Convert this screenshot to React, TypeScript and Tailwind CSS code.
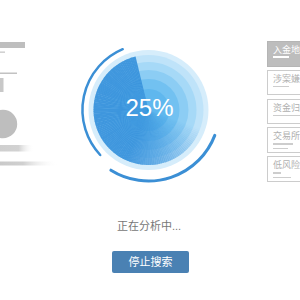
import React from "react";

const CX = 74.5;
const CY = 75;

function wedges() {
  const out: React.ReactElement[] = [];
  const step = 2;
  for (let a = 96; a < 345; a += step) {
    const mid = a + step / 2;
    let op = 0;
    if (mid < 110) op = 0;
    else if (mid < 205) op = ((mid - 110) / 95) * 0.95;
    else op = 0.95;
    if (op <= 0) continue;
    const r = 55;
    const a1 = ((a - 90) * Math.PI) / 180;
    const a2 = ((a + step + 0.4 - 90) * Math.PI) / 180;
    const x1 = CX + r * Math.cos(a1);
    const y1 = CY + r * Math.sin(a1);
    const x2 = CX + r * Math.cos(a2);
    const y2 = CY + r * Math.sin(a2);
    out.push(
      <path
        key={a}
        d={`M ${CX} ${CY} L ${x1.toFixed(2)} ${y1.toFixed(2)} A ${r} ${r} 0 0 1 ${x2.toFixed(2)} ${y2.toFixed(2)} Z`}
        fill="#3a93dc"
        fillOpacity={op}
      />
    );
  }
  return out;
}

function Progress() {
  return (
    <svg width="150" height="150" viewBox="0 0 150 150" className="block">
      <circle cx={CX} cy={CY} r="60" fill="#d6edfb" />
      <circle cx={CX} cy={CY} r="55" fill="#bfe3f9" />
      <circle cx={CX} cy={CY} r="48" fill="#a6d9f7" />
      <circle cx={CX} cy={CY} r="40" fill="#8ccdf4" />
      <circle cx={CX} cy={CY} r="31" fill="#72c1f1" />
      <circle cx={CX} cy={CY} r="21" fill="#5fb7ee" />
      {wedges()}
      <path
        d="M 26.2 120 A 66 66 0 0 1 48.7 14.2"
        fill="none"
        stroke="#3b8fd5"
        strokeWidth="2.5"
        strokeLinecap="round"
      />
      <path
        d="M 140.8 100.4 A 71 71 0 0 1 36.9 135.2"
        fill="none"
        stroke="#3b8fd5"
        strokeWidth="3"
        strokeLinecap="round"
      />
      <text
        x={CX + 1}
        y="81"
        textAnchor="middle"
        fontSize="24"
        fill="#ffffff"
        fontFamily="'Liberation Sans', Arial, sans-serif"
      >
        25%
      </text>
    </svg>
  );
}

function LeftArt() {
  return (
    <svg width="60" height="190" viewBox="0 0 60 190" className="block shrink-0">
      <defs>
        <linearGradient id="g1" x1="0" x2="1" y1="0" y2="0">
          <stop offset="0" stopColor="#cfcfcf" />
          <stop offset="0.55" stopColor="#d2d2d2" />
          <stop offset="1" stopColor="#ffffff" stopOpacity="0" />
        </linearGradient>
        <linearGradient id="g2" x1="0" x2="1" y1="0" y2="0">
          <stop offset="0" stopColor="#c9c9c9" />
          <stop offset="0.4" stopColor="#d0d0d0" />
          <stop offset="1" stopColor="#ffffff" stopOpacity="0" />
        </linearGradient>
      </defs>
      <rect x="0" y="42" width="25" height="6" fill="#bebebe" />
      <rect x="0" y="51.5" width="5" height="1.3" fill="#c8c8c8" />
      <rect x="0" y="72.5" width="17" height="1.5" fill="#c2c2c2" />
      <rect x="0" y="78" width="3.5" height="14" fill="#c8c8c8" />
      <circle cx="3" cy="124" r="14.2" fill="#bebebe" />
      <rect x="0" y="145" width="34" height="6.5" fill="url(#g1)" />
      <rect x="0" y="161.5" width="58" height="4" fill="url(#g2)" />
    </svg>
  );
}

const cards: { t: string; lines: number[] }[] = [
  { t: "涉案嫌疑", lines: [16] },
  { t: "资金归集", lines: [40] },
  { t: "交易所", lines: [20, 15] },
  { t: "低风险", lines: [8, 18] },
];

export default function App() {
  return (
    <div
      className="w-[300px] h-[300px] bg-white overflow-hidden flex flex-col"
      style={{ fontFamily: "'Liberation Sans', 'Noto Sans CJK SC', sans-serif" }}
    >
      <div className="flex items-start h-[190px] shrink-0">
        <LeftArt />
        <div className="ml-[14px] mt-[35px] shrink-0">
          <Progress />
        </div>
        <div className="ml-[43px] mt-[41px] flex flex-col gap-[3.25px] w-[60px] shrink-0">
          <div className="h-[25.5px] bg-[#bdbdbd] border border-[#b5b5b5] pl-[5px] pt-[3px]">
            <div className="text-[9px] leading-[10px] text-white whitespace-nowrap">入金地址</div>
            <div className="mt-[0.5px] h-[2px] w-[16px] bg-white" />
          </div>
          {cards.map((c) => (
            <div
              key={c.t}
              className="h-[25.5px] border border-[#cccccc] bg-white pl-[5px] pt-[3px]"
            >
              <div className="text-[9px] leading-[10px] text-[#b0b0b0] whitespace-nowrap">
                {c.t}
              </div>
              <div className="mt-[2px] flex flex-col gap-[3px]">
                {c.lines.map((w, i) => (
                  <div
                    key={i}
                    className="h-[1.5px] bg-[#cdcdcd]"
                    style={{ width: `${w}px` }}
                  />
                ))}
              </div>
            </div>
          ))}
        </div>
      </div>
      <div className="flex flex-col items-center">
        <div className="mt-[29px] text-[11px] leading-[15px] text-[#777777] ml-[-2px]">
          正在分析中...
        </div>
        <button className="mt-[17px] w-[77px] h-[22px] bg-[#4a81b3] rounded-[2px] text-white text-[11px] leading-[22px] ml-[1px]">
          停止搜索
        </button>
      </div>
    </div>
  );
}
